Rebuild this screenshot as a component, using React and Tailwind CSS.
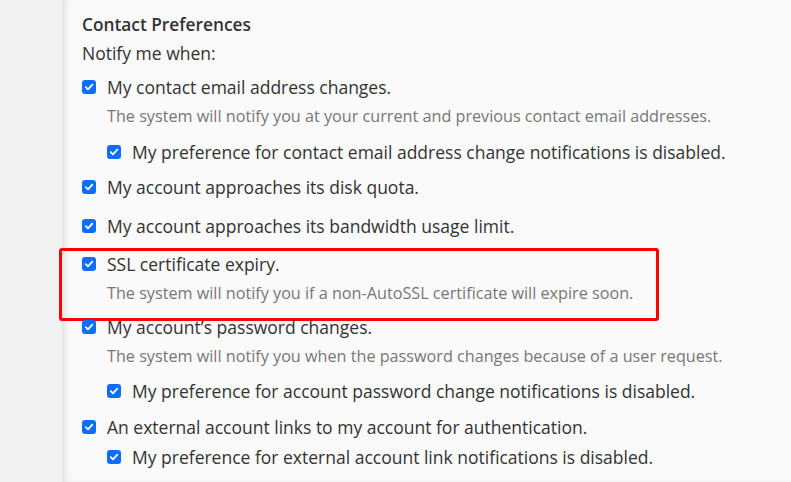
const items = [
  { text: 'My contact email address changes.', mt: 'mt-[10px]', level: 0 },
  { desc: 'The system will notify you at your current and previous contact email addresses.', mt: 'mt-[7px]' },
  { text: 'My preference for contact email address change notifications is disabled.', mt: 'mt-[14px]', level: 1 },
  { text: 'My account approaches its disk quota.', mt: 'mt-[11px]', level: 0 },
  { text: 'My account approaches its bandwidth usage limit.', mt: 'mt-[15px]', level: 0 },
  { text: 'SSL certificate expiry.', mt: 'mt-[14px]', level: 0, boxed: true },
  { desc: 'The system will notify you if a non-AutoSSL certificate will expire soon.', mt: 'mt-[7px]' },
  { text: "My account’s password changes.", mt: 'mt-[12px]', level: 0 },
  { desc: 'The system will notify you when the password changes because of a user request.', mt: 'mt-[7px]' },
  { text: 'My preference for account password change notifications is disabled.', mt: 'mt-[13px]', level: 1 },
  { text: 'An external account links to my account for authentication.', mt: 'mt-[12px]', level: 0 },
  { text: 'My preference for external account link notifications is disabled.', mt: 'mt-[6px]', level: 1 },
];

function Check() {
  return (
    <span className="flex h-[14px] w-[14px] shrink-0 items-center justify-center rounded-[3px] bg-[#0d6efd]">
      <svg width="10" height="10" viewBox="0 0 10 10" fill="none">
        <path d="M1.8 5.2 L4 7.3 L8.3 2.6" stroke="white" strokeWidth="1.8" strokeLinecap="round" strokeLinejoin="round" />
      </svg>
    </span>
  );
}

export default function App() {
  return (
    <div className="flex h-[482px] w-[791px] overflow-hidden bg-[#fafafa] font-['Open_Sans',sans-serif] text-[#333]">
      <div className="w-[62px] shrink-0 bg-[#f2f2f2]" />
      <div className="flex-1 pl-[20px] pt-[13px] shadow-[inset_7px_0_8px_-5px_rgba(0,0,0,0.13)]">
        <div className="whitespace-nowrap text-[17.3px] font-semibold leading-[24px]">Contact Preferences</div>
        <div className="mt-[4px] whitespace-nowrap text-[17.5px] leading-[24px]">Notify me when:</div>
        {items.map((it, i) =>
          it.desc ? (
            <div key={i} className={`${it.mt} whitespace-nowrap pl-[25px] text-[16.2px] leading-[20px] text-[#777]`}>{it.desc}</div>
          ) : (
            <div key={i} className={`${it.mt} relative flex items-center gap-[11px] whitespace-nowrap text-[17.5px] leading-[24px] ${it.level ? 'pl-[25px]' : ''}`}>
              <Check />
              <span>{it.text}</span>
              {it.boxed && (
                <div className="pointer-events-none absolute left-[-23px] top-[-4px] h-[73px] w-[600px] rounded-[3px] border-[3px] border-[#ff0000]" />
              )}
            </div>
          )
        )}
      </div>
    </div>
  );
}
